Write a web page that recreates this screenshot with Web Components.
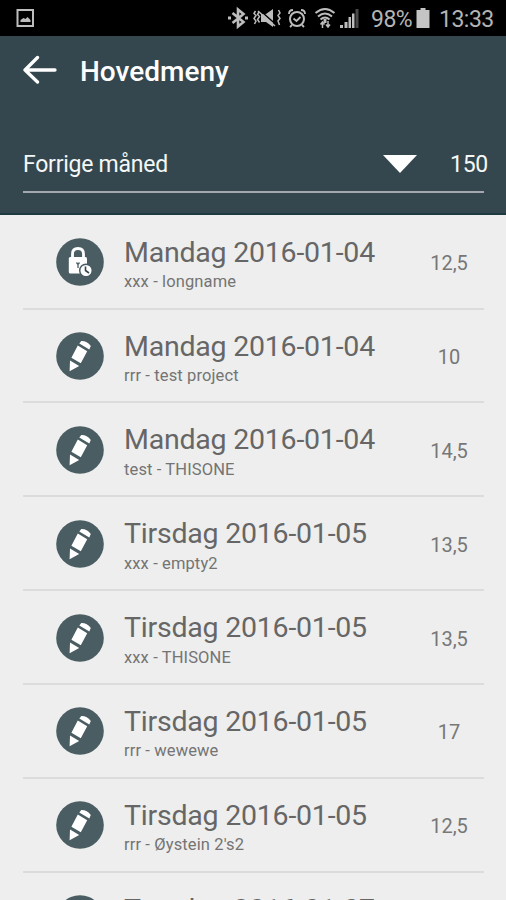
<!DOCTYPE html>
<html lang="no">
<head>
<meta charset="utf-8">
<title>Hovedmeny</title>
<style>
body { margin: 0; background: #eeeeee; font-family: Roboto, "Liberation Sans", sans-serif; }
</style>
</head>
<body>
<time-app></time-app>
<script>
const define = (name, html, setup) => customElements.define(name, class extends HTMLElement {
  connectedCallback() {
    if (this.shadowRoot) return;
    this.attachShadow({ mode: "open" }).innerHTML = html;
    if (setup) setup(this, this.shadowRoot);
  }
});

define("status-bar", `
<style>
:host { display: flex; box-sizing: border-box; height: 36px; padding: 0 0 0 16px; background: #000; color: #b4b4b4; align-items: center; font-size: 23px; line-height: 36px; white-space: nowrap; }
svg { display: block; flex: none; fill: none; stroke: #bdbdbd; }
.space { flex: 1; }
.pct { width: 40px; letter-spacing: -.5px; margin-left: 12px; }
.time { width: 67px; margin-left: 8px; letter-spacing: -.5px; }
span { padding-top: 3px; }
</style>
<svg width="19" height="36" viewBox="0 0 19 36"><rect x="1.500" y="10" width="15.500" height="16" stroke-width="2"/><path d="M4.500 22v-2l3-2 2 1 2-2 3 3v2z" fill="#bdbdbd" stroke="none"/></svg>
<div class="space"></div>
<svg width="131" height="36" viewBox="228 0 131 36" stroke-width="2">
  <path d="M232.500 13l11 9-5.500 4.500V9.500l5.500 4.500-11 9" stroke-width="2.600"/><path d="M228 18h3M245 18h3" stroke-width="3"/>
  <path d="M255.500 11l-1.500 2.500 2 2-2 3 2 2.500-1.500 3M259 12l-1.500 2.500 2 2-2 3 2 3M278.500 10l1.500 3-2 2.500 2 3-2 2.500 1.500 4" stroke-width="1.500"/>
  <path d="M261 14h5l7-5v18l-7-5h-5z" fill="#bdbdbd" stroke="none"/><path d="M259 9.500l17 15" stroke="#000" stroke-width="1.500"/><path d="M258 11l17 15" stroke-width="1.500"/>
  <circle cx="297" cy="19" r="7"/><path d="M293.500 18.500l3 2.500 4-4M289 14q0-4 4-4M305 14q0-4-4-4M292 25l-2 2M302 25l2 2" stroke-width="1.800"/>
  <path d="M315.500 13q9.500-8 19 0M318 16.500q7-6 14 0M320.500 19.500q4.500-4 9 0" stroke-width="2"/><path d="M325 19v4" stroke-width="3"/>
  <path d="M322.500 28v-6M320.500 24.500l2-2.500 2 2.500M328 21v6M326 24.500l2 2.500 2-2.500" stroke-width="1.500"/>
  <g fill="#bdbdbd" stroke="none"><path d="M340 25h3v3h-3zM344.500 22h3v6h-3zM348.500 17h2.500v11h-2.500zM352 13.500h2.500V28H352z"/><path d="M355.500 9h3v19h-3z" fill="#484848"/></g>
</svg>
<span class="pct">98%</span>
<svg width="15" height="36" viewBox="0 0 15 36" style="margin-left:5px"><path d="M.5 10h4V8h5v2h4v18H.5z" fill="#c4c4c4" stroke="none"/></svg>
<span class="time">13:33</span>`);

define("app-header", `
<style>
:host { display: flex; flex-direction: column; box-sizing: border-box; height: 179px; padding: 0 22px 0 23px; background: #34474e; border-bottom: 2px solid #1d3a40; color: #fff; }
.top { display: flex; align-items: center; height: 67px; gap: 23px; }
svg { display: block; flex: none; }
h1 { margin: 4px 0 0; font-size: 28px; font-weight: 500; line-height: 34px; }
</style>
<div class="top">
<svg width="34" height="30" viewBox="0 0 34 30" fill="none" stroke="#fff" stroke-width="3.300" stroke-linecap="round" stroke-linejoin="round"><path d="M14.500 2.500L2 15l12.500 12M2 15h30"/></svg>
<h1><slot name="title"></slot></h1></div>
<slot></slot>`);

define("month-picker", `
<style>
:host { display: flex; box-sizing: border-box; height: 47px; margin-top: 43px; padding-bottom: 9px; border-bottom: 2px solid #a4a7ae; align-items: center; color: #f4f7f7; font-size: 23px; line-height: 36px; white-space: nowrap; }
.label { flex: 1; letter-spacing: -.25px; padding-top: 2px; }
svg { display: block; margin-right: 33px; }
.sum { width: 34px; letter-spacing: -.3px; padding-top: 1px; }
</style>
<span class="label"><slot></slot></span>
<svg width="36" height="18" viewBox="0 0 36 18"><path d="M2 0h34L19 18z" fill="#fff"/></svg>
<span class="sum"><slot name="sum"></slot></span>`);

define("row-icon", `
<style>:host { display: block; width: 48px; height: 48px; flex: none; } svg { display: block; }</style>
<svg width="48" height="48" viewBox="0 0 48 48"></svg>`, (el, root) => {
  const pen = '<path fill="#fff" d="M23.300 11.600L25.300 9Q31 8.800 34.800 14L33.300 17.600zM21.800 13.600l9.400 5.600-6.400 12-9.400-5.400zM14 28.500l9.200 5.500-9.600 5.200z"/>';
  const lock = '<path d="M16.500 21v-5q0-5.500 5.500-5.500t5.500 5.500v5" fill="none" stroke="#fff" stroke-width="2.800"/><rect x="12.800" y="19" width="18.200" height="16.500" rx="1.500" fill="#fff"/><path d="M20.500 24.500l1.500 2 1.500-2M22 26.500V30" fill="none" stroke="#4a5c62" stroke-width="1.300"/><circle cx="30" cy="32.500" r="6.300" fill="#fff" stroke="#4a5c62" stroke-width="1.500"/><path d="M29.500 28.500v4l3.500 2.500" fill="none" stroke="#34474e" stroke-width="1.600"/>';
  root.querySelector("svg").innerHTML = '<circle cx="24" cy="24" r="23.800" fill="#4a5d63"/>' + (el.getAttribute("kind") === "lock" ? lock : pen);
});

define("time-entry", `
<style>
:host { display: flex; box-sizing: border-box; height: 93.830px; margin: 0 22px 0 23px; padding: 0 0 0 33px; align-items: flex-start; border-bottom: 2px solid #dcdcdc; color: #666; white-space: nowrap; }
row-icon { margin-top: 22.500px; }
.text { flex: 1; margin-left: 20px; padding-top: 19px; }
.day { font-size: 28.500px; line-height: 36px; letter-spacing: -.22px; }
.project { font-size: 16.500px; line-height: 22px; letter-spacing: .12px; padding-top: .5px; color: #747474; }
.hours { width: 70px; text-align: center; font-size: 20px; line-height: 26px; margin-top: 34.500px; color: #777; }
</style>
<div class="icon"></div>
<div class="text"><div class="day"><slot name="day"></slot></div><div class="project"><slot></slot></div></div>
<div class="hours"><slot name="hours"></slot></div>`, (el, root) => {
  const icon = document.createElement("row-icon");
  icon.setAttribute("kind", el.getAttribute("kind"));
  root.querySelector(".icon").replaceWith(icon);
});

const entries = [
  ["Mandag 2016-01-04", "xxx - longname", "12,5", "lock"],
  ["Mandag 2016-01-04", "rrr - test project", "10"],
  ["Mandag 2016-01-04", "test - THISONE", "14,5"],
  ["Tirsdag 2016-01-05", "xxx - empty2", "13,5"],
  ["Tirsdag 2016-01-05", "xxx - THISONE", "13,5"],
  ["Tirsdag 2016-01-05", "rrr - wewewe", "17"],
  ["Tirsdag 2016-01-05", "rrr - Øystein 2's2", "12,5"],
  ["Torsdag 2016-01-07", "", ""]
];
define("time-app", `
<style>:host { display: block; height: 900px; overflow: hidden; background: #eeeeee; } .list { padding-top: .8px; }</style>
<status-bar></status-bar>
<app-header><span slot="title">Hovedmeny</span><month-picker>Forrige måned<span slot="sum">150</span></month-picker></app-header>
<div class="list">${entries.map(([d, p, h, k]) => `<time-entry kind="${k || "pen"}"><span slot="day">${d}</span>${p}<span slot="hours">${h}</span></time-entry>`).join("")}</div>`);
</script>
</body>
</html>
